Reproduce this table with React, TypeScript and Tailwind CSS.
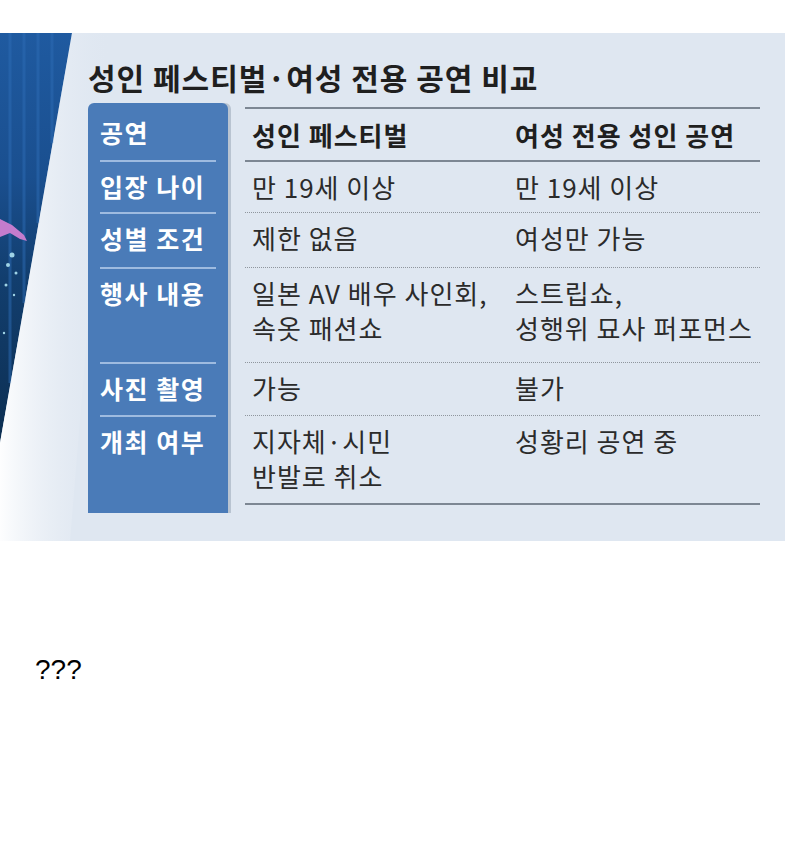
import React from 'react';

const KR = { fontFamily: '"Noto Sans CJK KR", "Noto Sans", sans-serif' };

// 행 높이 (표와 왼쪽 파란 칸이 같이 씀)
const rows = [
  { label: '입장 나이', a: ['만 19세 이상'], b: ['만 19세 이상'], h: 52 },
  { label: '성별 조건', a: ['제한 없음'], b: ['여성만 가능'], h: 55 },
  { label: '행사 내용', a: ['일본 AV 배우 사인회,', '속옷 패션쇼'], b: ['스트립쇼,', '성행위 묘사 퍼포먼스'], h: 95 },
  { label: '사진 촬영', a: ['가능'], b: ['불가'], h: 53 },
  { label: '개최 여부', a: ['지자체·시민', '반발로 취소'], b: ['성황리 공연 중'], h: 88 },
];

const PhotoStrip: React.FC = () => (
  <svg className="absolute inset-0" width="785" height="508" viewBox="0 0 785 508">
    <defs>
      <linearGradient id="curtain" x1="0" y1="0" x2="0" y2="1">
        <stop offset="0" stopColor="#1f5aa0" />
        <stop offset="0.35" stopColor="#1a4f8f" />
        <stop offset="0.6" stopColor="#123e6e" />
        <stop offset="1" stopColor="#0d2f52" />
      </linearGradient>
      <linearGradient id="curl" x1="0" y1="0" x2="1" y2="0">
        <stop offset="0" stopColor="#ffffff" stopOpacity="0.95" />
        <stop offset="1" stopColor="#dfe7f1" stopOpacity="0" />
      </linearGradient>
    </defs>
    <polygon points="0,0 72,0 0,410" fill="url(#curtain)" />
    <g stroke="#2d6cb5" strokeWidth="3" opacity="0.5">
      <line x1="10" y1="0" x2="10" y2="350" />
      <line x1="24" y1="0" x2="24" y2="270" />
      <line x1="38" y1="0" x2="38" y2="190" />
      <line x1="52" y1="0" x2="52" y2="110" />
    </g>
    <path d="M0 186 L12 192 L24 202 L27 208 L20 206 L10 200 L0 204 Z" fill="#c47ccd" />
    <g fill="#9fd3e6">
      <circle cx="12" cy="222" r="2.5" />
      <circle cx="8" cy="232" r="2" />
      <circle cx="16" cy="240" r="1.5" />
      <circle cx="6" cy="252" r="1.5" />
      <circle cx="14" cy="262" r="1.2" />
      <circle cx="4" cy="300" r="1.2" />
    </g>
    <polygon points="72,0 112,0 70,508 0,508 0,410" fill="url(#curl)" />
  </svg>
);

const App: React.FC = () => {
  return (
    <div className="w-[800px] min-h-[848px] bg-white" style={KR}>
      <div className="pt-[33px]">
        <div className="relative w-[785px] h-[508px] bg-[#dfe7f1] overflow-hidden">
          <PhotoStrip />

          <div className="relative pl-[88px] pt-[25px]">
            <h1 className="text-[30px] leading-[38px] font-bold text-[#1f1f1f] tracking-[1px]">
              성인 페스티벌·여성 전용 공연 비교
            </h1>

            <div className="flex mt-[7px]">
              {/* 왼쪽 파란 칸 */}
              <div className="w-[140px] bg-[#4a7bb8] rounded-t-[6px] shadow-[3px_0_0_#b9c4d1] text-white font-semibold text-[25px] leading-[35px] tracking-[1.5px]">
                <div className="h-[57px] pl-[12px] pt-[12px]">공연</div>
                {rows.map((r) => (
                  <div key={r.label} className="mx-[12px] border-t-2 border-[#9ebbe0]" style={{ height: r.h }}>
                    <div className="pt-[7px] whitespace-nowrap">{r.label}</div>
                  </div>
                ))}
                <div className="h-[10px]" />
              </div>

              {/* 표 */}
              <div className="ml-[17px] w-[515px] pt-[4px] text-[#2b2b2b] text-[26px] leading-[35px] tracking-[1px]">
                <div className="grid grid-cols-[270px_1fr] h-[53px] border-t-2 border-[#7d8793] font-bold text-[#1f1f1f]">
                  <div className="pl-[7px] pt-[8px] whitespace-nowrap">성인 페스티벌</div>
                  <div className="pt-[8px] whitespace-nowrap">여성 전용 성인 공연</div>
                </div>
                {rows.map((r, i) => (
                  <div
                    key={r.label}
                    className={`grid grid-cols-[270px_1fr] ${i === 0 ? 'border-t-2 border-solid border-[#7d8793]' : 'border-t border-dotted border-[#8f969e]'}`}
                    style={{ height: r.h }}
                  >
                    <div className="pl-[7px] pt-[7px] whitespace-nowrap">
                      {r.a.map((t) => (
                        <div key={t}>{t}</div>
                      ))}
                    </div>
                    <div className="pt-[7px] whitespace-nowrap">
                      {r.b.map((t) => (
                        <div key={t}>{t}</div>
                      ))}
                    </div>
                  </div>
                ))}
                <div className="border-t-2 border-[#7d8793]" />
              </div>
            </div>
          </div>
        </div>
      </div>

      <p className="pl-[35px] mt-[113px] text-[28px] leading-[32px] text-black" style={{ fontFamily: '"Liberation Sans", Arial, sans-serif' }}>
        ???
      </p>
    </div>
  );
};

export default App;
